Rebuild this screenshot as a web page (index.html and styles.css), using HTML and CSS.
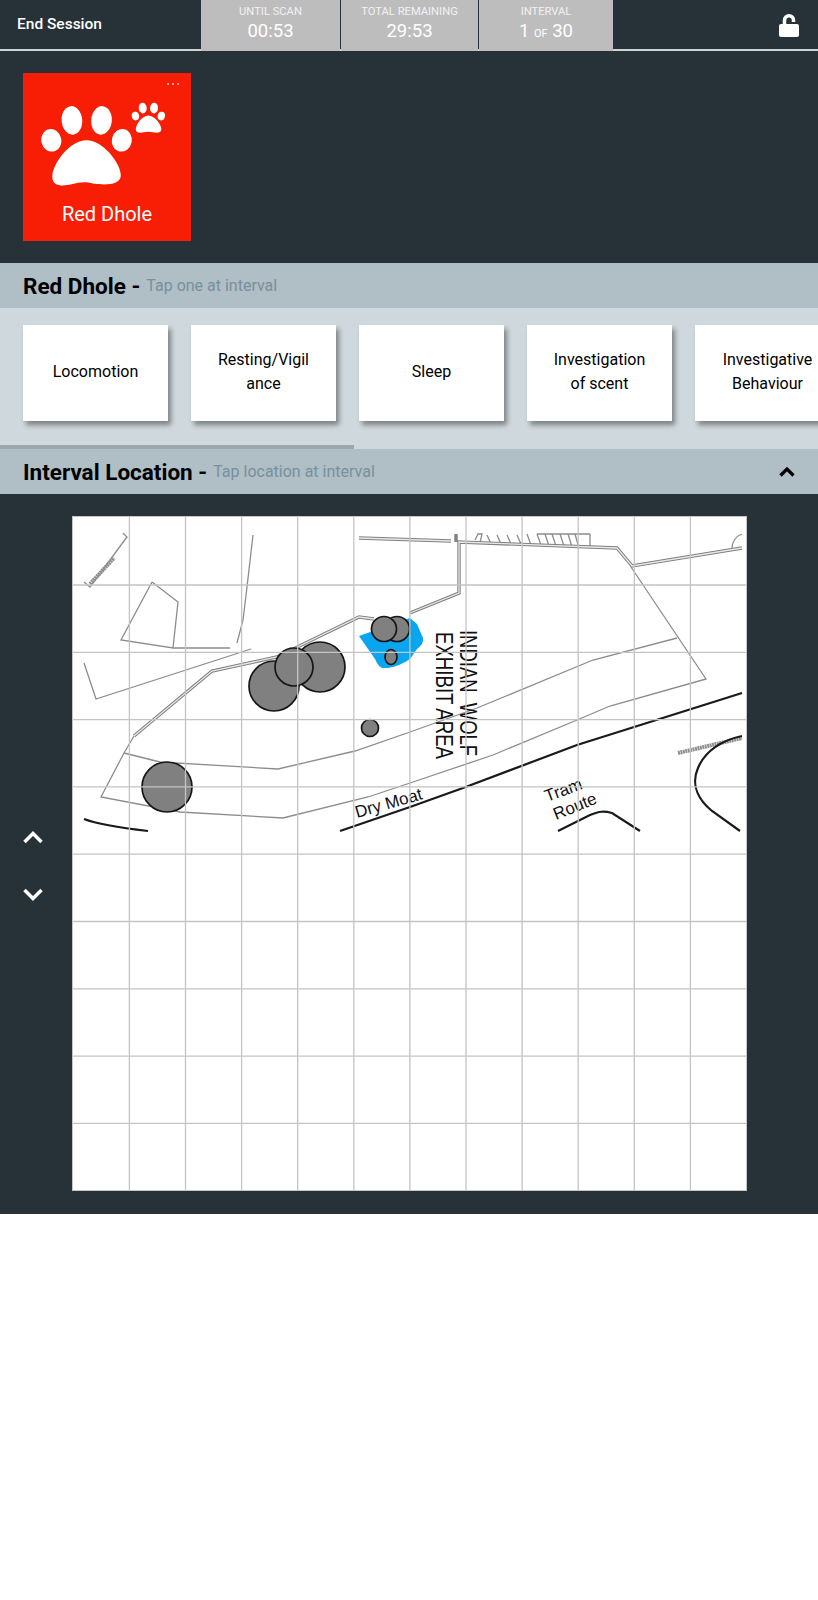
FILE: index.html
```html
<!DOCTYPE html>
<html lang="en">
<head>
    <meta charset="UTF-8">
    <meta name="viewport" content="width=device-width, initial-scale=1.0">
    <title>Red Dhole - Session</title>
    <link rel="stylesheet" href="styles.css">
</head>
<body>
    <div class="app">
        <header class="topbar">
            <div class="end-session">End Session</div>
            <div class="stat">
                <div class="stat-label">UNTIL SCAN</div>
                <div class="stat-value">00:53</div>
            </div>
            <div class="stat">
                <div class="stat-label">TOTAL REMAINING</div>
                <div class="stat-value">29:53</div>
            </div>
            <div class="stat">
                <div class="stat-label">INTERVAL</div>
                <div class="stat-value">1 <small>OF</small> 30</div>
            </div>
            <svg class="lock" viewBox="0 0 20 23" width="20" height="23">
                <path class="lock-shackle" d="M5.5 11V6.5C5.500 3.500 7.500 1.800 10 1.800C12.500 1.800 14.500 3.500 14.500 6.500V8" />
                <rect y="10" width="20" height="13" rx="2" />
            </svg>
        </header>

        <section class="animals">
            <div class="animal-card">
                <div class="card-dots"><span></span><span></span><span></span></div>
                <svg class="paw" viewBox="60 95 385 255" width="128" height="85">
                    <path d="M200 210C150 210 97 280 97 320C97 350 130 348 155 342C175 337 190 334 205 337C225 342 303 354 303 315C303 280 250 210 200 210Z" />
                    <ellipse cx="94" cy="210" rx="30" ry="34" transform="rotate(-12 94 210)" />
                    <ellipse cx="156" cy="150" rx="31" ry="43" transform="rotate(-5 156 150)" />
                    <ellipse cx="245" cy="150" rx="31" ry="43" transform="rotate(5 245 150)" />
                    <ellipse cx="306" cy="210" rx="30" ry="34" transform="rotate(12 306 210)" />
                    <path d="M386 135C368 135 348 162 348 177C348 189 362 188 372 186C380 184 392 184 400 186C410 188 425 189 425 176C425 162 404 135 386 135Z" />
                    <ellipse cx="347" cy="137" rx="11" ry="13" transform="rotate(-12 347 137)" />
                    <ellipse cx="369" cy="113" rx="12" ry="16" transform="rotate(-5 369 113)" />
                    <ellipse cx="403" cy="113" rx="12" ry="16" transform="rotate(5 403 113)" />
                    <ellipse cx="425" cy="137" rx="11" ry="13" transform="rotate(12 425 137)" />
                </svg>
                <div class="card-name">Red Dhole</div>
            </div>
        </section>

        <div class="section-head">
            <h2>Red Dhole -</h2>
            <span class="hint">Tap one at interval</span>
        </div>

        <section class="behaviours">
            <div class="behaviour-row">
                <div class="behaviour">Locomotion</div>
                <div class="behaviour">Resting/Vigil<br>ance</div>
                <div class="behaviour">Sleep</div>
                <div class="behaviour">Investigation of scent</div>
                <div class="behaviour">Investigative Behaviour</div>
            </div>
            <div class="scroll-thumb"></div>
        </section>

        <div class="section-head">
            <h2>Interval Location -</h2>
            <span class="hint">Tap location at interval</span>
            <svg class="collapse" viewBox="0 0 16 10" width="16" height="10">
                <path d="M1.500 8.500L8 2L14.500 8.500" />
            </svg>
        </div>

        <section class="location">
            <div class="floor-nav">
                <svg viewBox="0 0 20 13" width="20" height="13"><path d="M1.500 11L10 2.500L18.500 11" /></svg>
                <svg viewBox="0 0 20 13" width="20" height="13"><path d="M1.500 2L10 10.500L18.500 2" /></svg>
            </div>

            <svg class="map" viewBox="0 0 675 675" width="675" height="675">
                <!-- water and markers sit under the grid -->
                <path class="water" d="M287 120L338 102L345 108L351 122Q352 128 345 133L338 143Q328 150 316 152L310 152Q306 150 303 143Z" />

                <g class="thin">
                    <path d="M51 17L55 21L18 71L12 66" />
                    <path d="M80 66L106 86L101 132L49 124L80 66" />
                    <path d="M101 132L158 132" />
                    <path d="M181 19L175 71L171 104L165 127" />
                    <path d="M12 147L24 183L179 133" />
                    <path d="M62 220L52 237L29 281L108 296L211 302L296 281L338 267L421 239L505 204L538 190L634 163L559 51" />
                    <path d="M52 237L88 246L206 253L283 235L338 216L405 192L521 144L605 122" />
                    <path d="M660 32C660 26 664 20 670 18" />
                    <path d="M403 24L406 18L410 18L408 27M415 19L419 28M425 19L429 28M435 19L439 28M445 19L449 28M455 18L459 29M465 18L469 29M473 18L477 30M480 18L484 30M488 18L492 30M496 18L500 31M503 18L507 32M518 18V31M465 18H518" />
                </g>

                <g class="wall">
                    <path d="M62 220L140 155L205 141L287 101L302 103" />
                    <path d="M338 97L387 77V26L545 32L560 50L670 32" />
                    <path d="M287 22L379 25" />
                    <path d="M384 18V26" />
                </g>
                <g class="wall-core">
                    <path d="M62 220L140 155L205 141L287 101L302 103" />
                    <path d="M338 97L387 77V26L545 32L560 50L670 32" />
                    <path d="M287 22L379 25" />
                </g>

                <path class="fence" d="M18 68L42 42" />
                <path class="fence" d="M606 237L670 222" />

                <g class="ink">
                    <path d="M12 303C25 308 50 312 76 315" />
                    <path d="M268 315L338 291L391 272L505 229L670 177" />
                    <path d="M486 315L518 299C528 295 532 295 540 297L568 315" />
                    <path d="M670 220C650 224 633 235 626 252C618 270 628 285 640 295L668 315" />
                </g>

                <g class="marker">
                    <circle cx="202" cy="170" r="25" />
                    <circle cx="248" cy="151" r="25" />
                    <circle cx="222" cy="151" r="19" />
                    <circle cx="298" cy="212" r="8.500" />
                    <circle cx="95" cy="271" r="25" />
                    <circle cx="325" cy="113" r="12.500" />
                    <circle cx="312" cy="113" r="12.500" />
                    <ellipse cx="319" cy="141" rx="6" ry="7.500" />
                </g>

                <g class="map-text">
                    <text transform="translate(388 114) rotate(90)" textLength="126" lengthAdjust="spacingAndGlyphs">INDIAN  WOLF</text>
                    <text transform="translate(364 116) rotate(90)" textLength="127" lengthAdjust="spacingAndGlyphs">EXHIBIT AREA</text>
                </g>
                <g class="map-label">
                    <text transform="translate(285 302) rotate(-16)">Dry Moat</text>
                    <text transform="translate(475 286) rotate(-20)">Tram</text>
                    <text transform="translate(484 304) rotate(-22)">Route</text>
                </g>

                <path class="grid" d="M57.400 0V675M113.500 0V675M169.600 0V675M225.700 0V675M281.800 0V675M337.900 0V675M394 0V675M450.100 0V675M506.200 0V675M562.300 0V675M618.400 0V675M0 69H675M0 136.300H675M0 203.600H675M0 270.900H675M0 338.200H675M0 405.500H675M0 472.800H675M0 540.100H675M0 607.400H675" />
            </svg>
        </section>
    </div>
</body>
</html>
```

FILE: styles.css
```css
* {
    margin: 0;
    padding: 0;
    box-sizing: border-box;
    font-family: Roboto, 'Liberation Sans', sans-serif;
}

body {
    background-color: #fff;
    color: #000;
}

.app {
    background-color: #263238;
}

.topbar {
    display: flex;
    height: 51px;
    border-bottom: 2px solid #cfd2d3;
    color: #fff;
}

.end-session {
    width: 201px;
    padding: 15px 0 0 17px;
    font-size: 15.500px;
    font-weight: 500;
    line-height: 18px;
}

.stat {
    width: 139px;
    height: 51px;
    margin-right: 1px;
    background-color: #bdbdbd;
    text-align: center;
}

.stat:nth-child(3) {
    width: 137px;
}

.stat:nth-child(4) {
    width: 134px;
    margin-right: 0;
}

.stat-label {
    padding-top: 5px;
    font-size: 11.200px;
    line-height: 14px;
    color: #f2f2f2;
}

.stat-value {
    font-size: 18.500px;
    line-height: 25px;
}

.stat-value small {
    font-size: 11px;
}

.lock {
    margin: 14px 19px 0 auto;
    fill: #fff;
}

.lock-shackle {
    fill: none;
    stroke: #fff;
    stroke-width: 3.500;
}

.animals {
    height: 212px;
    padding: 22px 23px 0;
}

.animal-card {
    position: relative;
    width: 168px;
    height: 168px;
    padding: 29px 0 0 17px;
    background-color: #f71e05;
    color: #fff;
}

.card-dots {
    position: absolute;
    top: 10px;
    right: 12px;
    display: flex;
    gap: 3px;
}

.card-dots span {
    width: 2px;
    height: 2px;
    border-radius: 50%;
    background-color: #ffd0c8;
}

.paw {
    display: block;
    fill: #fff;
}

.card-name {
    margin: 15px 0 0 -17px;
    font-size: 20px;
    line-height: 24px;
    text-align: center;
}

.section-head {
    display: flex;
    align-items: center;
    gap: 6px;
    height: 45px;
    padding-left: 23px;
    background-color: #b0bec5;
}

.section-head h2 {
    font-size: 22.500px;
    font-weight: 700;
}

.hint {
    font-size: 16px;
    color: #78909c;
}

.collapse {
    margin-left: auto;
    margin-right: 23px;
    fill: none;
    stroke: #000;
    stroke-width: 3.200;
}

.behaviours {
    height: 141px;
    padding-top: 17px;
    background-color: #cfd8dc;
    overflow: hidden;
}

.behaviour-row {
    display: flex;
    gap: 23px;
    height: 96px;
    padding-left: 23px;
    margin-bottom: 24px;
}

.behaviour {
    display: flex;
    flex: 0 0 145px;
    align-items: center;
    justify-content: center;
    padding: 0 22px 2px;
    background-color: #fff;
    box-shadow: 3px 4px 5px rgba(0, 0, 0, 0.4);
    font-size: 16px;
    line-height: 24px;
    text-align: center;
}

.scroll-thumb {
    width: 354px;
    height: 4px;
    background-color: #9ca8ae;
}

.location {
    display: flex;
    height: 720px;
    padding-top: 22px;
}

.floor-nav {
    display: flex;
    flex-direction: column;
    align-items: center;
    gap: 44px;
    width: 72px;
    padding: 315px 6px 0 0;
}

.floor-nav svg {
    fill: none;
    stroke: #fff;
    stroke-width: 3.500;
}

.map {
    display: block;
    background-color: #fff;
    outline: 1px solid #c4c4c4;
    outline-offset: -1px;
}

.water {
    fill: #0aa5ef;
}

.thin path {
    fill: none;
    stroke: #8c8c8c;
    stroke-width: 1.300;
}

.wall path {
    fill: none;
    stroke: #808080;
    stroke-width: 3.400;
}

.wall-core path {
    fill: none;
    stroke: #e8e8e8;
    stroke-width: 1.300;
}

.fence {
    fill: none;
    stroke: #8f8f8f;
    stroke-width: 4;
    stroke-dasharray: 2 0.500;
}

.ink path {
    fill: none;
    stroke: #1a1a1a;
    stroke-width: 2.200;
}

.marker {
    fill: #808080;
    stroke: #151515;
    stroke-width: 1.700;
}

.map-text text {
    font-family: 'Liberation Sans', sans-serif;
    font-size: 23px;
    fill: #111;
    white-space: pre;
}

.map-label text {
    font-family: 'Liberation Sans', sans-serif;
    font-size: 17px;
    fill: #111;
}

.grid {
    fill: none;
    stroke: #c4c4c4;
    stroke-width: 1.300;
}
```
